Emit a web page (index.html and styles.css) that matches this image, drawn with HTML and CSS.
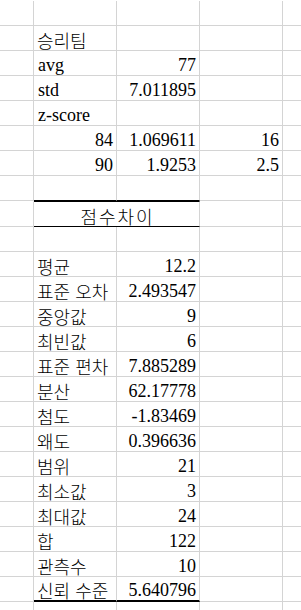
FILE: index.html
```html
<!DOCTYPE html>
<html lang="ko">
<head>
<meta charset="utf-8">
<title>Sheet</title>
<link rel="stylesheet" href="styles.css">
</head>
<body>
<div class="sheet">
  <div class="row"><div class="cell a"></div><div class="cell"></div><div class="cell"></div><div class="cell"></div><div class="cell e"></div></div>
  <div class="row"><div class="cell a"></div><div class="cell ko">승리팀</div><div class="cell"></div><div class="cell"></div><div class="cell e"></div></div>
  <div class="row"><div class="cell a"></div><div class="cell">avg</div><div class="cell num">77</div><div class="cell"></div><div class="cell e"></div></div>
  <div class="row"><div class="cell a"></div><div class="cell">std</div><div class="cell num">7.011895</div><div class="cell"></div><div class="cell e"></div></div>
  <div class="row"><div class="cell a"></div><div class="cell">z-score</div><div class="cell"></div><div class="cell"></div><div class="cell e"></div></div>
  <div class="row"><div class="cell a"></div><div class="cell num">84</div><div class="cell num">1.069611</div><div class="cell num">16</div><div class="cell e"></div></div>
  <div class="row"><div class="cell a"></div><div class="cell num">90</div><div class="cell num">1.9253</div><div class="cell num">2.5</div><div class="cell e"></div></div>
  <div class="row"><div class="cell a"></div><div class="cell tb"></div><div class="cell tb"></div><div class="cell"></div><div class="cell e"></div></div>
  <div class="row head"><div class="cell a"></div><div class="cell ko hdr">점수차이</div><div class="cell"></div><div class="cell e"></div></div>
  <div class="row"><div class="cell a"></div><div class="cell"></div><div class="cell"></div><div class="cell"></div><div class="cell e"></div></div>
  <div class="row"><div class="cell a"></div><div class="cell ko">평균</div><div class="cell num">12.2</div><div class="cell"></div><div class="cell e"></div></div>
  <div class="row"><div class="cell a"></div><div class="cell ko">표준 오차</div><div class="cell num">2.493547</div><div class="cell"></div><div class="cell e"></div></div>
  <div class="row"><div class="cell a"></div><div class="cell ko">중앙값</div><div class="cell num">9</div><div class="cell"></div><div class="cell e"></div></div>
  <div class="row"><div class="cell a"></div><div class="cell ko">최빈값</div><div class="cell num">6</div><div class="cell"></div><div class="cell e"></div></div>
  <div class="row"><div class="cell a"></div><div class="cell ko">표준 편차</div><div class="cell num">7.885289</div><div class="cell"></div><div class="cell e"></div></div>
  <div class="row"><div class="cell a"></div><div class="cell ko">분산</div><div class="cell num">62.17778</div><div class="cell"></div><div class="cell e"></div></div>
  <div class="row"><div class="cell a"></div><div class="cell ko">첨도</div><div class="cell num">-1.83469</div><div class="cell"></div><div class="cell e"></div></div>
  <div class="row"><div class="cell a"></div><div class="cell ko">왜도</div><div class="cell num">0.396636</div><div class="cell"></div><div class="cell e"></div></div>
  <div class="row"><div class="cell a"></div><div class="cell ko">범위</div><div class="cell num">21</div><div class="cell"></div><div class="cell e"></div></div>
  <div class="row"><div class="cell a"></div><div class="cell ko">최소값</div><div class="cell num">3</div><div class="cell"></div><div class="cell e"></div></div>
  <div class="row"><div class="cell a"></div><div class="cell ko">최대값</div><div class="cell num">24</div><div class="cell"></div><div class="cell e"></div></div>
  <div class="row"><div class="cell a"></div><div class="cell ko">합</div><div class="cell num">122</div><div class="cell"></div><div class="cell e"></div></div>
  <div class="row"><div class="cell a"></div><div class="cell ko">관측수</div><div class="cell num">10</div><div class="cell"></div><div class="cell e"></div></div>
  <div class="row"><div class="cell a"></div><div class="cell ko bb">신뢰 수준</div><div class="cell num bb">5.640796</div><div class="cell"></div><div class="cell e"></div></div>
  <div class="row"><div class="cell a"></div><div class="cell"></div><div class="cell"></div><div class="cell"></div><div class="cell e"></div></div>
</div>
</body>
</html>
```

FILE: styles.css
```css
html, body {
  margin: 0;
  padding: 0;
  background: #ffffff;
  overflow: hidden;
}

.sheet {
  padding-top: 1px;
  font-family: "Liberation Serif", "Times New Roman", serif;
  font-size: 18px;
  color: #000000;
}

.row {
  display: grid;
  grid-template-columns: 34px 83px 83px 83px 1fr;
  height: 25px;
}

.row.head {
  height: 26px;
}

.cell {
  border-right: 1px solid #d4d4d4;
  border-bottom: 1px solid #d4d4d4;
  display: flex;
  align-items: flex-end;
  justify-content: flex-start;
  padding: 0 3px 0 4px;
  line-height: 20px;
  white-space: nowrap;
  min-width: 0;
}

.cell.e {
  border-right: none;
}

.head .cell {
  border-top: 1px solid transparent;
}

.num {
  justify-content: flex-end;
}

.ko {
  font-family: "Noto Sans CJK KR", "Noto Sans CJK SC", sans-serif;
  font-weight: 300;
  font-size: 18px;
  letter-spacing: 0;
  padding-left: 3px;
}

.tb {
  border-bottom-color: #000000;
}

.head .cell.hdr {
  grid-column: span 2;
  justify-content: center;
  border-top-color: #000000;
  border-bottom-color: #000000;
  letter-spacing: 2px;
  padding-left: 6px;
  padding-right: 4px;
}

.bb {
  border-bottom: 2px solid #000000;
}
```
